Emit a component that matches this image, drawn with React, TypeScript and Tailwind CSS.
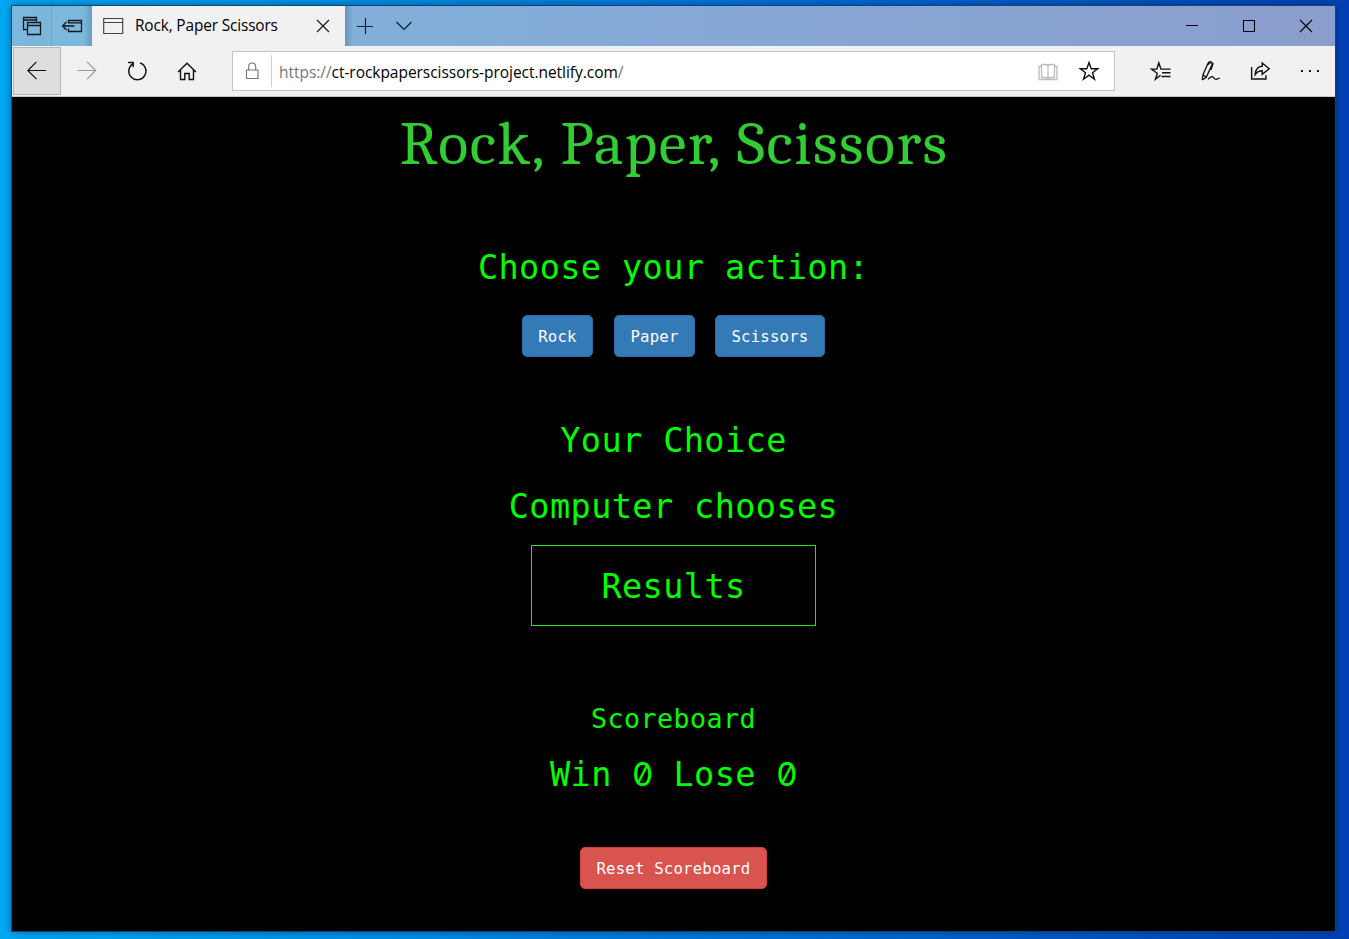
import type { ReactNode } from "react";

function Icon({ w = 24, h = 24, children, className = "" }: { w?: number; h?: number; children: ReactNode; className?: string }) {
  return (
    <svg
      width={w}
      height={h}
      viewBox={`0 0 ${w} ${h}`}
      fill="none"
      stroke="currentColor"
      strokeWidth="1.15"
      className={`block shrink-0 ${className}`}
    >
      {children}
    </svg>
  );
}

function TitleBar() {
  return (
    <div className="flex h-10 bg-linear-to-r from-[#7cb7dc] via-[#86a9d8] via-50% to-[#8a9dcd] text-[#101820]">
      <div className="flex w-[40px] items-center justify-center border-r border-[#6da3c6] pl-px">
        <Icon>
          <path d="M7.5 15.5h-4v-12h13v4M3.5 6h13M7.5 8.5h13v12h-13zM7.5 11.5h13" strokeWidth="1.3" />
        </Icon>
      </div>
      <div className="flex w-[40px] items-center justify-center bg-linear-to-r from-[#7cb7dc] from-80% to-[#679cc0]">
        <Icon>
          <path d="M8.5 9.5v-3h13v11h-13v-3M8.5 8.8h13M2.5 12h12M6.5 8l-4 4 4 4" strokeWidth="1.3" />
        </Icon>
      </div>
      <div className="flex w-[253px] items-center bg-[#f1f1f1] pl-[11px] pr-[14px]">
        <Icon w={21} h={18} className="text-[#444]">
          <path d="M.7 1.5h19v15h-19zM.7 5.5h19" />
        </Icon>
        <span className="ml-[11px] flex-1 whitespace-nowrap font-['Open_Sans','Noto_Sans',sans-serif] text-[15.4px] leading-5 tracking-[-0.14px] text-black">
          Rock, Paper Scissors
        </span>
        <Icon w={16} h={16}>
          <path d="M2 2l12 12M14 2L2 14" />
        </Icon>
      </div>
      <div className="flex w-[40px] items-center justify-center bg-linear-to-r from-[#6995ba] to-transparent to-20%">
        <Icon w={18} h={18}>
          <path d="M1 9.5h16M9.5 1v16" />
        </Icon>
      </div>
      <div className="flex w-[38px] items-center justify-center">
        <Icon w={18} h={18}>
          <path d="M1.5 5l7.5 7.5L16.5 5" />
        </Icon>
      </div>
      <div className="ml-auto flex items-center gap-[41px] pr-[21px] text-black">
        <Icon w={16} h={16}>
          <path d="M2 7.5h12" strokeWidth="1" />
        </Icon>
        <Icon w={16} h={16}>
          <path d="M2.5 2.5h11v11h-11z" strokeWidth="1.1" />
        </Icon>
        <Icon w={16} h={16}>
          <path d="M2 2l12 12M14 2L2 14" strokeWidth="1.1" />
        </Icon>
      </div>
    </div>
  );
}

const star = "M12 3.5l2.2 6.3h6.5l-5.2 3.9 2 6.5-5.5-4-5.5 4 2-6.5-5.2-3.9h6.5z";

function Toolbar() {
  return (
    <div className="flex h-[51px] border-b border-[#c9c9c9] bg-[#f1f1f1] text-[#111]">
      <div className="ml-px mt-px flex h-12 w-12 items-center justify-center border border-[#b5b5b5] bg-[#dedede]">
        <Icon>
          <path d="M21.2 11.5H3M11.5 2.8L2.8 11.5l8.7 8.7" />
        </Icon>
      </div>
      <div className="flex w-[51px] items-center justify-center text-[#989898]">
        <Icon>
          <path d="M2.5 11.5h18.2M12 2.8l8.7 8.7-8.7 8.7" />
        </Icon>
      </div>
      <div className="flex w-[50px] items-center justify-center">
        <Icon>
          <path d="M15 3.9A8.6 8.6 0 1 1 7.8 4.8M3.2 3.5h5v4.8" strokeWidth="1.4" />
        </Icon>
      </div>
      <div className="flex w-[50px] items-center justify-center">
        <Icon>
          <path d="M3 13l9-8.8 9 8.8M5.5 11v9.5h4.3v-6h4.4v6h4.3V11" strokeWidth="1.4" />
        </Icon>
      </div>
      <div className="ml-5 mt-[5px] flex h-10 w-[883px] items-center border border-[#c4c4c4] bg-white">
        <div className="flex h-8 w-[39px] items-center justify-center border-r border-[#cfcfcf] text-[#777]">
          <Icon w={18} h={20}>
            <path d="M3.5 9h11.5v8.5H3.5zM5.7 9V5.5a3.5 3.5 0 0 1 7 0V9" />
          </Icon>
        </div>
        <span className="ml-[7px] mt-[2px] whitespace-nowrap font-['Open_Sans','Noto_Sans',sans-serif] text-[15.5px] leading-5 tracking-[-0.04px] text-black">
          <span className="text-[#777]">https://</span>ct-rockpaperscissors-project.netlify.com<span className="text-[#777]">/</span>
        </span>
        <div className="ml-auto mr-[13px] flex items-center gap-[17px]">
          <Icon className="text-[#bcbcbc]">
            <path d="M12 6.5v13M5.5 5.5h4.3q2.2 0 2.2 1.5 0-1.5 2.2-1.5h4.3v13h-4.3q-2.2 0-2.2 1.5 0-1.5-2.2-1.5H5.5zM5.5 7.5H3v13h18v-13h-2.5" strokeWidth="1.3" />
          </Icon>
          <Icon>
            <path d={star} strokeWidth="1.4" />
          </Icon>
        </div>
      </div>
      <div className="ml-auto flex items-center gap-[26px] pr-[12px]">
        <Icon>
          <path d="M8.4 14.4l-2 5.8 5.2-4M6.8 13.3l-4.3-3.2h5.3l2-6.3 2.1 6.3h9.6M6.8 13.3l1.6 1.1M13 13.7h8.5M12.5 17.5h9" strokeWidth="1.4" />
        </Icon>
        <Icon>
          <path d="M3.2 21l.8-5.2L9 4.2q1.2-2.2 3.3-1.2 1.6 1 .6 3.1L7.2 18.2l-4 2.8M4 15.8l3.2 2.4M8.2 6l4.8-3.2M12.6 3.4l1.4 1.2-2 6.2M9 20.3c2.2-2.6 4.5-3.3 5.5-1.9s1.4 2.2 2.7 1.9l3.6-1.3" strokeWidth="1.3" />
        </Icon>
        <Icon>
          <path d="M2.6 8v12h14.3V16.3M13.2 4l7 5.7-7 5.6v-3.5c-3.5 0-5.3 1.3-7 3.7.3-5 2.7-8 7-8.2z" strokeWidth="1.4" />
        </Icon>
        <Icon>
          <path d="M2 11h2v2H2zM10 11h2v2h-2zM18 11h2v2h-2z" fill="currentColor" stroke="none" />
        </Icon>
      </div>
    </div>
  );
}

function Heading({ children, className = "" }: { children: ReactNode; className?: string }) {
  return <h2 className={`h-10 whitespace-nowrap text-[33.5px] leading-10 tracking-[0.42px] text-[#00ff00] ${className}`}>{children}</h2>;
}

function Zero() {
  return (
    <span className="inline-block w-[20.6px] text-center font-['Inter',sans-serif] text-[33px] leading-none tracking-normal [font-feature-settings:'zero']">0</span>
  );
}

function ActionButton({ label, className }: { label: string; className: string }) {
  return (
    <button className={`h-[42px] whitespace-nowrap rounded-[5px] border pt-px text-[15.7px] leading-5 tracking-[0.18px] text-white ${className}`}>
      {label}
    </button>
  );
}

export default function App() {
  return (
    <div className="h-[939px] w-[1349px] overflow-hidden bg-linear-to-r from-[#00a8f3] via-[#0078dc] to-[#0040b5] pl-3 pt-1.5">
      <div className="h-[925px] w-[1323px] shadow-[0_0_8px_rgba(0,20,60,0.6)] outline outline-[#12466f]">
        <TitleBar />
        <Toolbar />
        <main className="flex h-[834px] flex-col items-center bg-black pt-[7px] font-['DejaVu_Sans_Mono',monospace]">
          <h1 className="h-20 scale-x-[1.02] whitespace-nowrap pl-[2px] font-['Cambria','Caladea','Liberation_Serif',serif] text-[61px] leading-[80px] tracking-[1.55px] [word-spacing:1px] text-[#32cd32]">
            Rock, Paper, Scissors
          </h1>
          <Heading className="mt-[64px]">Choose your action:</Heading>
          <div className="mt-[27px] flex">
            <ActionButton label="Rock" className="w-[71px] border-[#2e6da4] bg-[#337ab7]" />
            <ActionButton label="Paper" className="ml-[21px] w-[81px] border-[#2e6da4] bg-[#337ab7]" />
            <ActionButton label="Scissors" className="ml-5 w-[110px] border-[#2e6da4] bg-[#337ab7]" />
          </div>
          <Heading className="mt-[64px]">Your Choice</Heading>
          <Heading className="mt-[26px]">Computer chooses</Heading>
          <div className="mt-[18px] h-[81px] w-[285px] bg-[#28e028] p-px">
            <div className="flex h-full justify-center bg-black pt-[21px]">
              <Heading>Results</Heading>
            </div>
          </div>
          <h3 className="mt-[77px] h-8 text-[26.6px] leading-8 tracking-[0.5px] text-[#00ff00]">Scoreboard</h3>
          <Heading className="mt-5">
            Win <Zero /> Lose <Zero />
          </Heading>
          <ActionButton label="Reset Scoreboard" className="mt-[52px] w-[187px] border-[#d43f3a] bg-[#d9534f]" />
        </main>
      </div>
    </div>
  );
}
